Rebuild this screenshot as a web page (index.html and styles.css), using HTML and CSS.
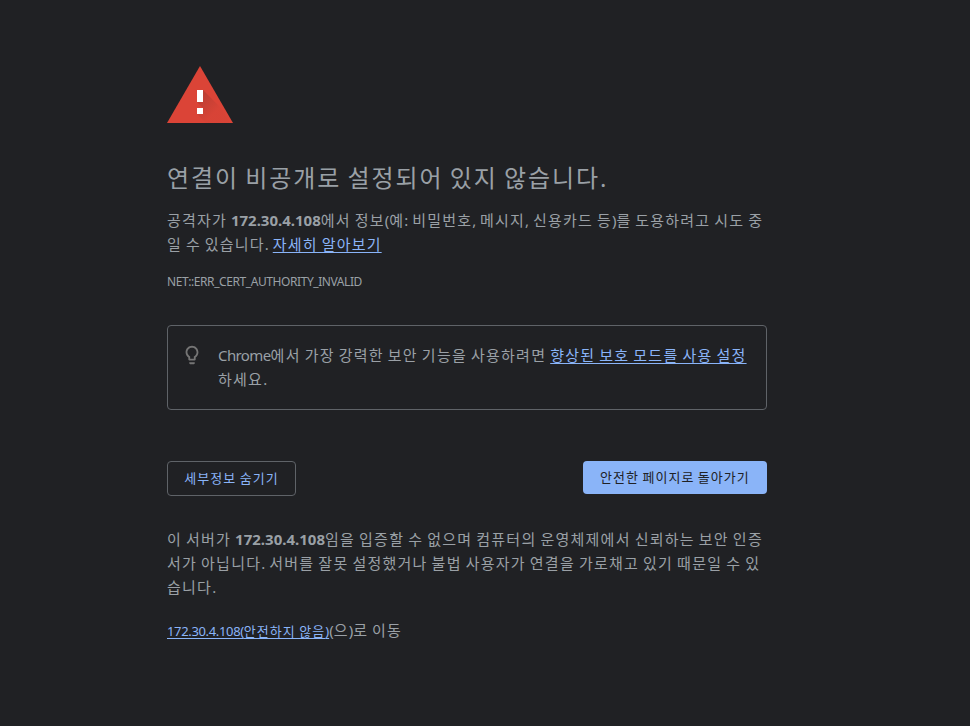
FILE: index.html
```html
<!DOCTYPE html>
<html lang="ko">
<head>
<meta charset="utf-8">
<title>개인 정보 보호 오류</title>
<link rel="stylesheet" href="styles.css">
</head>
<body>
<main class="page">
<svg class="warning" width="66" height="57" viewBox="0 0 66 57"><defs><linearGradient id="shade" x1="30" y1="24" x2="50" y2="44" gradientUnits="userSpaceOnUse"><stop offset="0" stop-color="#3e2723" stop-opacity=".25"/><stop offset="1" stop-color="#3e2723" stop-opacity=".02"/></linearGradient></defs><path d="M33 0 66 57H0Z" fill="#db4437"/><path d="M36 24 55 43 63 57H39L30 48 36 42 30 36Z" fill="url(#shade)"/><path d="M30 24h6v12h-6zM30 42h6v6h-6z" fill="#fff"/></svg>
<h1>연결이 비공개로 설정되어 있지 않습니다<i>.</i></h1>
<p class="copy">공격자가 <b>172.30.4.108</b>에서 정보<i>(</i>예<i>:</i> 비밀번호<i>,</i> 메시지<i>,</i> 신용카드 등<i>)</i>를 도용하려고 시도 중<br>일 수 있습니다<i>.</i> <a href="#">자세히 알아보기</a></p>
<div class="code">NET::ERR_CERT_AUTHORITY_INVALID</div>
<section class="tip">
<svg class="bulb" width="22" height="22" viewBox="0 0 24 24" fill="#757575"><path d="M9 21c0 .55.45 1 1 1h4c.55 0 1-.45 1-1v-1H9v1zm3-19C8.14 2 5 5.14 5 9c0 2.38 1.19 4.47 3 5.74V17c0 .55.45 1 1 1h6c.55 0 1-.45 1-1v-2.26c1.81-1.27 3-3.36 3-5.74 0-3.86-3.14-7-7-7zm2.85 11.1l-.85.6V16h-4v-2.3l-.85-.6A4.997 4.997 0 0 1 7 9c0-2.76 2.24-5 5-5s5 2.24 5 5c0 1.63-.8 3.16-2.15 4.1z"/></svg>
<p><span class="latin">Chrome</span>에서 가장 강력한 보안 기능을 사용하려면 <a href="#">향상된 보호 모드를 사용 설정</a><br>하세요<i>.</i></p>
</section>
<div class="actions">
<button class="secondary">세부정보 숨기기</button>
<button class="primary">안전한 페이지로 돌아가기</button>
</div>
<p class="copy details">이 서버가 <b>172.30.4.108</b>임을 입증할 수 없으며 컴퓨터의 운영체제에서 신뢰하는 보안 인증<br>서가 아닙니다<i>.</i> 서버를 잘못 설정했거나 불법 사용자가 연결을 가로채고 있기 때문일 수 있<br>습니다<i>.</i></p>
<p class="copy proceed"><a class="small" href="#"><span class="address">172.30.4.108(</span>안전하지 않음<i>)</i></a><i>(</i>으<i>)</i>로 이동</p>
</main>
</body>
</html>
```
FILE: styles.css
```css
* { box-sizing: border-box; }
body { margin: 0; min-height: 726px; background: #202124; color: #9aa0a6; font: 15px/24px "Noto Sans", "Noto Sans CJK KR", sans-serif; }
.page { width: 600px; margin-left: 167px; padding-top: 66px; }
.warning, .bulb { display: block; flex: none; }
.bulb { margin-left: 1px; }
h1, p { margin: 0; font-weight: 400; white-space: nowrap; }
h1, p, button, .small { letter-spacing: .08em; word-spacing: -.08em; }
i, b { font-style: normal; letter-spacing: 0; }
h1 { margin-top: 40px; font-size: 24px; line-height: 30px; }
.copy { margin-top: 15px; }
a { color: #8ab4f8; text-underline-offset: 2px; }
.code { margin-top: 14px; font-size: 12px; line-height: 24px; letter-spacing: -.42px; }
.tip { display: flex; height: 85px; margin-top: 31px; padding: 18px 12px; border: 1px solid #5f6368; border-radius: 4px; }
.tip p { margin: -1px 0 0 15px; letter-spacing: 1.25px; }
.latin { letter-spacing: -.6px; }
.actions { display: flex; justify-content: space-between; margin-top: 51px; }
button { padding: 0 0 2px; font: 13px/20px "Noto Sans", "Noto Sans CJK KR", sans-serif; border-radius: 4px; }
.secondary { width: 129px; height: 35px; border: 1px solid #5f6368; color: #8ab4f8; background: #202124; }
.primary { width: 184px; height: 33px; border: 0; color: #202124; background: #8ab4f8; }
.details { margin-top: 31px; letter-spacing: 1.25px; }
.proceed { margin-top: 19px; }
.small { font-size: 13px; }
.address { letter-spacing: -.34px; }
```
